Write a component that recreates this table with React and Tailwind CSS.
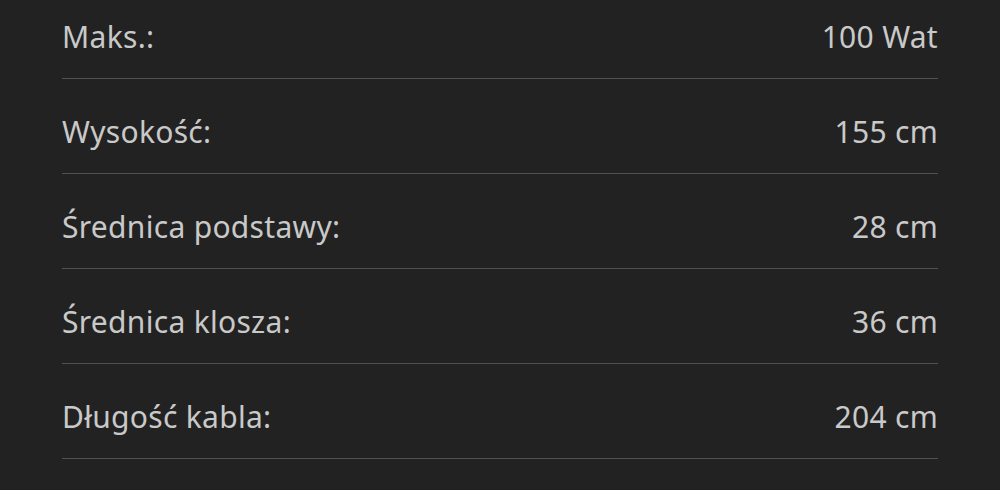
const specs = [
  { label: "Maks.:", value: "100 Wat" },
  { label: "Wysokość:", value: "155 cm" },
  { label: "Średnica podstawy:", value: "28 cm" },
  { label: "Średnica klosza:", value: "36 cm" },
  { label: "Długość kabla:", value: "204 cm" },
];

export default function App() {
  return (
    <main
      className="h-[490px] w-full overflow-hidden bg-[#222222] px-[62px]"
      style={{ fontFamily: '"Noto Sans", "Open Sans", sans-serif' }}
    >
      <div className="-mt-[16px]">
        {specs.map((row) => (
          <div
            key={row.label}
            className="flex items-center justify-between border-b border-[#505050] pt-[32px] pb-[21px] text-[30px] leading-[41px] tracking-[0.3px] text-[#c9c9c9]"
          >
            <span>{row.label}</span>
            <span>{row.value}</span>
          </div>
        ))}
      </div>
    </main>
  );
}
